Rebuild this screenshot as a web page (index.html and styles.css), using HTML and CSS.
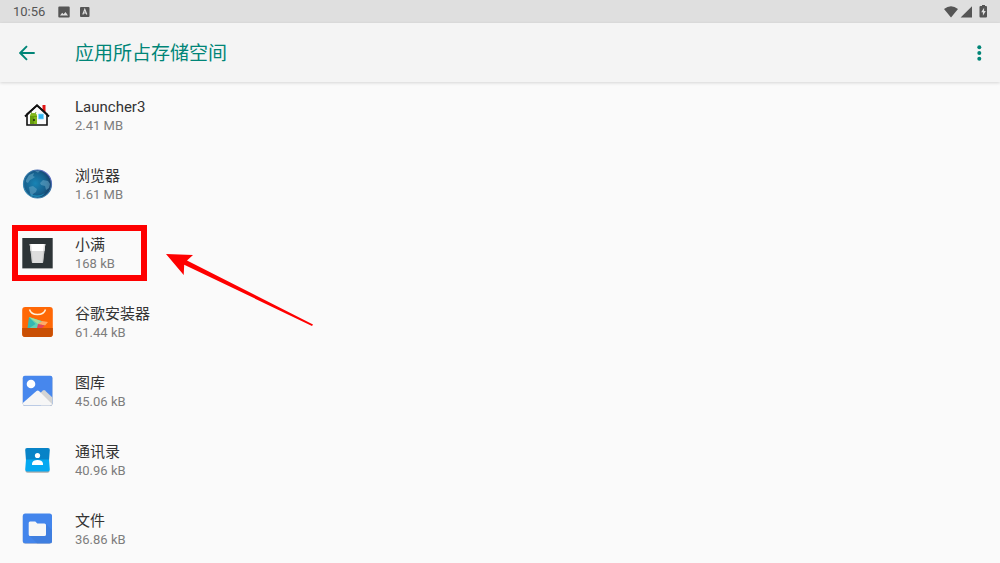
FILE: index.html
```html
<!DOCTYPE html>
<html lang="zh-CN">
<head>
<meta charset="utf-8">
<meta name="viewport" content="width=device-width, initial-scale=1">
<title>应用所占存储空间</title>
<link rel="stylesheet" href="styles.css">
</head>
<body>
<div class="status">
  <span class="clock">10:56</span>
  <svg class="notice" width="12" height="12" viewBox="0 0 12 12" aria-hidden="true"><path fill="#555" fill-rule="evenodd" d="M1.300 .5h9.400q1 0 1 1v9q0 1-1 1H1.300q-1 0-1-1v-9q0-1 1-1zM2 9.500h8L7.500 6 5.600 8.300 4.200 6.800z"/></svg>
  <svg class="notice" width="12" height="12" viewBox="0 0 12 12" aria-hidden="true"><rect x="1" y="1" width="9.500" height="10" rx="1" fill="#555"/><path d="M3.800 8.500 5.800 3.300l2 5.200M4.500 7h2.600" fill="none" stroke="#e0e0e0" stroke-width="1.200"/></svg>
  <svg class="signals" width="46" height="16" viewBox="0 0 46 16" aria-hidden="true">
    <path fill="#555" d="M0 5Q7 -.300 14 5L7 13.600zM16.600 13.600 28 2.200v11.400z"/>
    <path fill="#555" d="M36.500 1.900h1.500V.900h3v1H42q1 0 1 1v9.700q0 1-1 1h-5.500q-1 0-1-1V2.900q0-1 1-1z"/>
    <path fill="#e0e0e0" d="M40.100 3.800 37.200 8.300h1.700v3.500l2.900-4.800h-1.700z"/>
  </svg>
</div>
<header class="bar">
  <button class="icon-button" aria-label="返回"><svg width="16" height="16" viewBox="0 0 16 16"><path d="M15.700 8H1.500M8 1.200 1.200 8 8 14.800" fill="none" stroke="#008577" stroke-width="1.900"/></svg></button>
  <h1 class="title">应用所占存储空间</h1>
  <button class="icon-button more" aria-label="更多选项"><svg width="6" height="16" viewBox="0 0 6 16"><g fill="#008577"><circle cx="3.300" cy="2.300" r="2"/><circle cx="3.300" cy="8" r="2"/><circle cx="3.300" cy="13.700" r="2"/></g></svg></button>
</header>
<main class="content">
  <ul class="apps">
    <li class="app">
      <svg class="app-icon" viewBox="0 0 32 32" aria-hidden="true">
        <path d="M21.500 6h3v8h-3z" fill="#e01414"/>
        <path d="M6 15 16 6.500 26 15v11H6z" fill="#fafafa" stroke="#111" stroke-width="1.600"/>
        <path d="M4 17.500 16 6.300l12 11.200" fill="none" stroke="#111" stroke-width="1.900"/>
        <path d="M9 17q0-3 3.500-3t3.500 3v8H9z" fill="#83b81a"/><path d="m10 13 1 2m4-2-1 2M9 17.500h7" stroke="#5d940d" stroke-width=".8"/>
        <path d="M9 25V18h4v7z" fill="#669b0e"/><circle cx="13" cy="21" r=".9" fill="#111"/>
        <path d="M17.500 15h5v5h-5z" fill="#30b5f2" stroke="#87d8fc" stroke-width=".7"/>
      </svg>
      <div class="info"><span class="name">Launcher3</span><span class="size">2.41 MB</span></div>
    </li>
    <li class="app">
      <svg class="app-icon" viewBox="0 0 32 32" aria-hidden="true">
        <defs><radialGradient id="globe" cx=".42" cy=".48" r=".6"><stop offset="0" stop-color="#1884b5"/><stop offset=".65" stop-color="#17608d"/><stop offset="1" stop-color="#163b62"/></radialGradient>
        <linearGradient id="rim" x1="0" y1="1" x2="1" y2="0"><stop offset="0" stop-color="#378fb8"/><stop offset=".6" stop-color="#3273a4"/><stop offset="1" stop-color="#7868cf"/></linearGradient></defs>
        <circle cx="16.500" cy="16" r="14" fill="url(#globe)" stroke="url(#rim)" stroke-width="1.200"/>
        <path d="M5 12 8 7l5-2-1 3 2 1-3 2-2 1-2 3-2-1zM14 3l5-.2-2 2zM8 19l4-1 4 3-1 3-3 2-1 3-2-4zM19 15l3-3 5 1 2 3-1 4-3 2-1-4-4-1z" fill="#69a8c6" opacity=".55"/>
        <path d="M8 25q8 5 16 0-3 4-8 4t-8-4z" fill="#1c9cca" opacity=".7"/>
      </svg>
      <div class="info"><span class="name">浏览器</span><span class="size">1.61 MB</span></div>
    </li>
    <li class="app">
      <svg class="app-icon" viewBox="0 0 32 32" aria-hidden="true">
        <path d="M1.300 1h30.400v30.400H1.300z" fill="#2d3437"/><path d="M8.700 7h15.600l-2.300 19H11z" fill="#ddd"/><path d="M8.700 7h15.600l-.8 7H9.500z" fill="#fff"/>
        <path d="m8.700 7 2.300 19h1L10.100 7zm15.600 0-2.300 19h-1l1.900-19z" fill="#bbb" opacity=".5"/>
      </svg>
      <div class="info"><span class="name">小满</span><span class="size">168 kB</span></div>
      <span class="highlight"></span>
      <svg class="arrow" width="150" height="76" viewBox="0 0 150 76" aria-hidden="true"><path d="M1 1 28 2l-6 5.500L148 71.500l-1 1.400L19.200 11.700 18.700 22z" fill="#fe0000"/></svg>
    </li>
    <li class="app">
      <svg class="app-icon" viewBox="0 0 32 32" aria-hidden="true">
        <rect x="1.200" y="1" width="30.600" height="30" rx="3" fill="#ff6806"/>
        <path d="M1.200 22h30.600v6q0 3-3 3H4.200q-3 0-3-3z" fill="#c94f04"/>
        <path d="M8.500 3.500q1.500 5 8 5t8-5" fill="none" stroke="#fff0d9" stroke-width="1.500"/>
        <path d="m8 11 9 7-8 4H6.500z" fill="#35b8b1"/><path d="m8 11 14 4.500-5 6.500H8.500l6-4z" fill="#62d0b5"/><path d="m8 11 12 4-3 3z" fill="#a8dd9a"/><path d="m17 18 4-3 6 1-3 3.500z" fill="#ffab68"/><path d="m17 18 7 1.500-3 2.500h-5z" fill="#e5465a"/>
      </svg>
      <div class="info"><span class="name">谷歌安装器</span><span class="size">61.44 kB</span></div>
    </li>
    <li class="app">
      <svg class="app-icon" viewBox="0 0 32 32" aria-hidden="true">
        <rect x="1.800" y="1.300" width="29.600" height="29.700" rx="2" fill="#bbb"/><rect x="1.800" y=".7" width="29.600" height="29.700" rx="2" fill="#4787ed"/>
        <path d="m18 19 4-3.500q1-.8 2 0l7.400 7v5.900q0 2-2 2H20z" fill="#d4d4d4"/><path d="M1.800 28 15.500 16q1.300-1 2.500 0L31 29q-.7 1.400-2.200 1.400h-25q-2 0-2-2z" fill="#f6f6f6"/>
        <circle cx="10" cy="9" r="4.300" fill="#fff"/>
      </svg>
      <div class="info"><span class="name">图库</span><span class="size">45.06 kB</span></div>
    </li>
    <li class="app">
      <svg class="app-icon" viewBox="0 0 32 32" aria-hidden="true">
        <path d="M4.500 27q0 1.800 2 1.800h20q2 0 2-1.800z" fill="#aaa"/>
        <path d="M6 4h21q2 0 1.800 2L28 16.500H5L4.200 6Q4 4 6 4z" fill="#0883c7"/>
        <path d="M5 15.500h23l.8 10q.2 2-1.800 2H6q-2 0-1.800-2z" fill="#05a9f1"/>
        <circle cx="16.500" cy="11.500" r="2.600" fill="#fff"/><path d="M11 21v-1.700q1-3.300 5.500-3.300t5.500 3.300V21z" fill="#fff"/>
      </svg>
      <div class="info"><span class="name">通讯录</span><span class="size">40.96 kB</span></div>
    </li>
    <li class="app">
      <svg class="app-icon" viewBox="0 0 32 32" aria-hidden="true">
        <rect x="1.800" y="1.100" width="29.200" height="29.700" rx="2.500" fill="#aab4c7"/><rect x="1.800" y=".5" width="29.200" height="29.700" rx="2.500" fill="#4385ec"/>
        <path d="m24.500 10.500 6.500 6.500v10.700q0 2.500-2.500 2.500H16l-7.500-7.500z" fill="#3f7edf"/>
        <path d="M9 8.500h5.300l2 2h7.200q1.500 0 1.500 1.500v9.500q0 1.500-1.500 1.500H9.200q-1.500 0-1.500-1.500V10Q7.700 8.500 9 8.500z" fill="#f7f7f7"/>
      </svg>
      <div class="info"><span class="name">文件</span><span class="size">36.86 kB</span></div>
    </li>
  </ul>
</main>
</body>
</html>
```
FILE: styles.css
```css
* {
  box-sizing: border-box;
}

body {
  margin: 0;
  height: 100vh;
  display: flex;
  flex-direction: column;
  background: #fafafa;
  color: #333;
  font-family: Roboto, "Noto Sans CJK SC", sans-serif;
}

.status {
  display: flex;
  flex: none;
  align-items: center;
  gap: 9px;
  height: 23px;
  padding: 0 10px 0 13px;
  background: #dfdfdf;
}

.clock {
  margin-right: 4px;
  color: #555;
  font-size: 13px;
  line-height: 23px;
}

.signals {
  margin-left: auto;
}

.bar {
  display: flex;
  flex: none;
  align-items: center;
  height: 59px;
  padding: 0 14px 0 12px;
  background: #f4f4f4;
  box-shadow: 0 1px 3px rgba(0, 0, 0, 0.15);
  z-index: 1;
}

.icon-button {
  display: flex;
  align-items: center;
  justify-content: center;
  width: 30px;
  height: 40px;
  padding: 0;
  border: 0;
  background: none;
}

.more {
  width: 14px;
  margin-left: auto;
}

.title {
  margin: 0 0 0 33px;
  padding-top: 2px;
  color: #008577;
  font-size: 19px;
  font-weight: 400;
  line-height: 28px;
}

.content {
  flex: 1;
  min-height: 0;
  overflow: hidden auto;
  scrollbar-width: none;
}

.apps {
  margin: 0;
  padding: 0;
  list-style: none;
}

.app {
  position: relative;
  display: flex;
  align-items: center;
  gap: 22px;
  height: 69px;
  padding: 0 21px 4px;
}

.app-icon {
  flex: none;
  width: 32px;
  height: 32px;
}

.info {
  display: flex;
  flex-direction: column;
  padding-top: 3px;
}

.name {
  font-size: 15px;
  line-height: 20px;
}

.size {
  color: #7d7d7d;
  font-size: 13px;
  line-height: 18px;
}

.highlight {
  position: absolute;
  top: 5px;
  left: 12px;
  width: 135px;
  height: 56px;
  border: 6px solid #fe0000;
}

.arrow {
  position: absolute;
  top: 33px;
  left: 165px;
}
```
